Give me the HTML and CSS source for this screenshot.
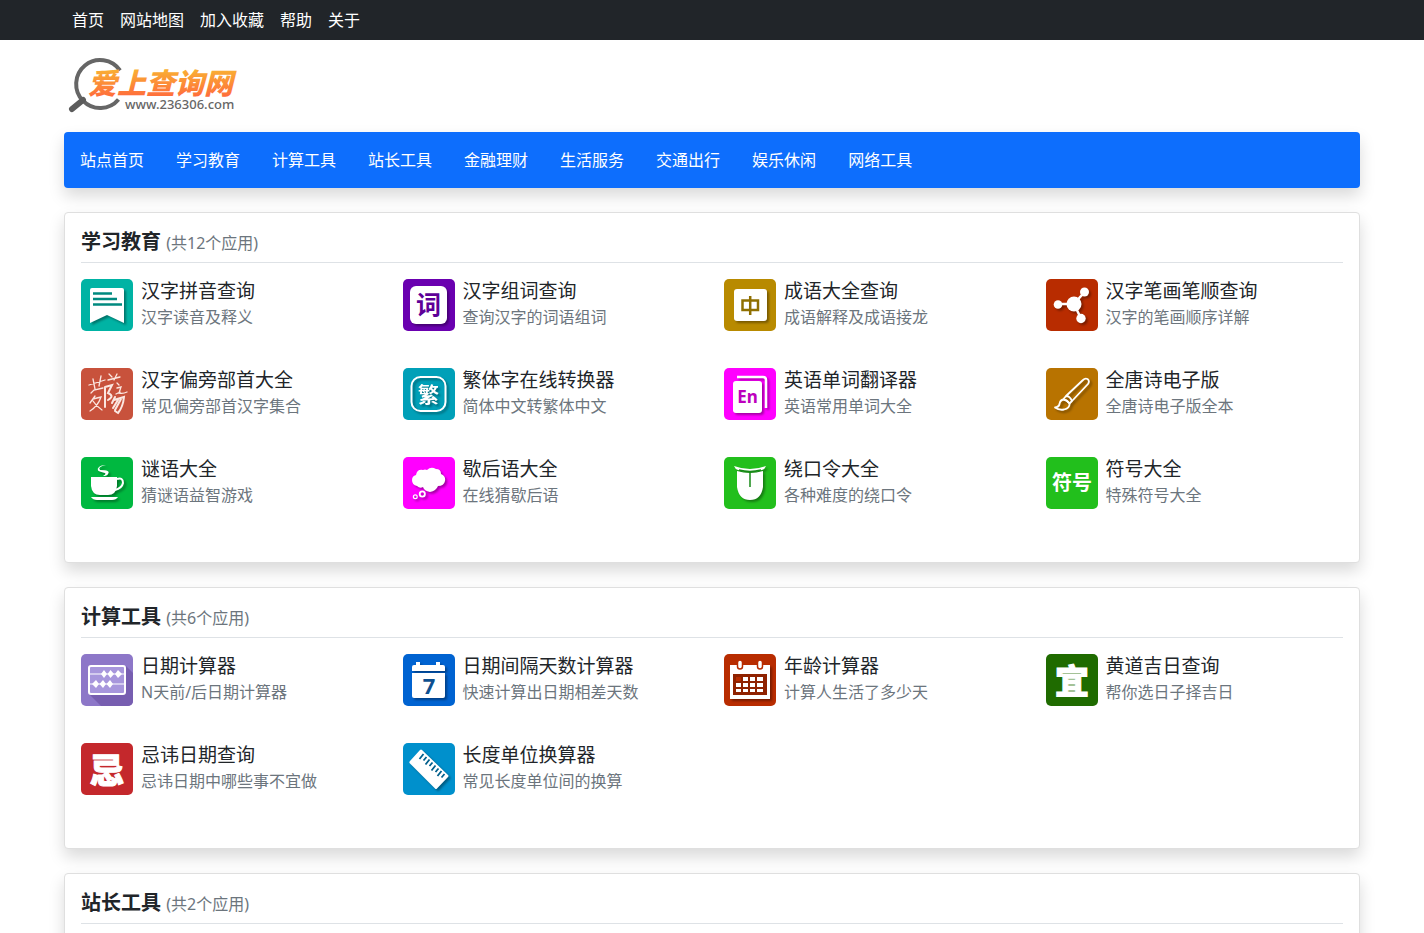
FILE: index.html
```html
<!DOCTYPE html>
<html lang="zh-CN">
<head>
    <meta charset="UTF-8">
    <meta name="viewport" content="width=device-width, initial-scale=1.0">
    <title>爱上查询网</title>
    <link rel="stylesheet" href="styles.css">
</head>
<body>
    <!-- Top bar -->
    <div class="topbar">
        <nav class="container topbar-nav">
            <a href="#">首页</a>
            <a href="#">网站地图</a>
            <a href="#">加入收藏</a>
            <a href="#">帮助</a>
            <a href="#">关于</a>
        </nav>
    </div>

    <div class="container">
        <!-- Logo -->
        <header class="header">
            <a href="#" class="logo">
                <svg width="180" height="60" viewBox="0 0 180 60">
                    <defs>
                        <linearGradient id="orange" x1="0" y1="0" x2="0" y2="1">
                            <stop offset="0.2" stop-color="#f9b233"/>
                            <stop offset="0.9" stop-color="#ff6a3c"/>
                        </linearGradient>
                    </defs>
                    <path d="M56 14.500A24 24 0 1 0 54.500 43.500" fill="none" stroke="#666" stroke-width="4"/>
                    <path d="M19 44L8 53" stroke="#5c5c5c" stroke-width="6" stroke-linecap="round"/>
                    <text class="logo-name" x="24" y="38" fill="url(#orange)">爱上查询网</text>
                    <text class="logo-url" x="61" y="53">www.236306.com</text>
                </svg>
            </a>
        </header>

        <!-- Main menu -->
        <nav class="menu">
            <a href="#">站点首页</a>
            <a href="#">学习教育</a>
            <a href="#">计算工具</a>
            <a href="#">站长工具</a>
            <a href="#">金融理财</a>
            <a href="#">生活服务</a>
            <a href="#">交通出行</a>
            <a href="#">娱乐休闲</a>
            <a href="#">网络工具</a>
        </nav>

        <!-- 学习教育 -->
        <section class="card">
            <h2>学习教育 <small>(共12个应用)</small></h2>
            <div class="apps">
                <a href="#" class="app">
                    <svg class="icon bg-teal" viewBox="0 0 52 52">
                        <path class="white" d="M11 9H41Q43 9 43 11V44L26 36L9 44V11Q9 9 11 9Z"/>
                        <path d="M12 14.500H31M12 20H36M12 25.500H41" stroke="#00897f" stroke-width="2.500"/>
                    </svg>
                    <span class="info"><b>汉字拼音查询</b><span>汉字读音及释义</span></span>
                </a>
                <a href="#" class="app">
                    <svg class="icon bg-purple" viewBox="0 0 52 52">
                        <rect class="white" x="7" y="7" width="37" height="38" rx="6"/>
                        <text x="25.500" y="35" font-size="25" fill="#5d0098">词</text>
                    </svg>
                    <span class="info"><b>汉字组词查询</b><span>查询汉字的词语组词</span></span>
                </a>
                <a href="#" class="app">
                    <svg class="icon bg-gold" viewBox="0 0 52 52">
                        <rect class="white" x="10" y="10" width="33" height="32" rx="3"/>
                        <path d="M18.500 21.500H34V31H18.500ZM26.200 17V36" fill="none" stroke="#8f6f00" stroke-width="2.500"/>
                    </svg>
                    <span class="info"><b>成语大全查询</b><span>成语解释及成语接龙</span></span>
                </a>
                <a href="#" class="app">
                    <svg class="icon bg-red" viewBox="0 0 52 52">
                        <g class="white">
                            <path d="M28 25L38.500 13M28 25H12M28 25L35 39.500" stroke="#fff" stroke-width="2.500"/>
                            <circle cx="28" cy="25" r="7.500"/>
                            <circle cx="38.500" cy="13" r="4.500"/>
                            <circle cx="12" cy="25.500" r="4.300"/>
                            <circle cx="35" cy="39.500" r="4.700"/>
                        </g>
                    </svg>
                    <span class="info"><b>汉字笔画笔顺查询</b><span>汉字的笔画顺序详解</span></span>
                </a>
                <a href="#" class="app">
                    <svg class="icon bg-brick" viewBox="0 0 52 52">
                        <g fill="none" stroke="#fbe6e0" stroke-width="1.300" stroke-linecap="round">
                            <path d="M8 17L24 12M12 11L14 21M20 8L18 18M10 25L13 22L22 20"/>
                            <path d="M28 6L31 9M36 6L33 12M27 12L39 9M36 15L38 17M36 20L40 19L38 25Q42 26 46 24M35 26L39 24"/>
                            <path stroke-width="2" d="M24 19V39M24 19L31 17L27 25Q34 28 27 32"/>
                            <path d="M14 28L9 35M12 31L20 29Q17 38 9 43M12 33Q15 38 21 42"/>
                            <path stroke-width="2" d="M34 29L31 35M33 32L43 29Q42 39 37 45L34 43M37 32L32 40M40 31L34 42"/>
                        </g>
                    </svg>
                    <span class="info"><b>汉字偏旁部首大全</b><span>常见偏旁部首汉字集合</span></span>
                </a>
                <a href="#" class="app">
                    <svg class="icon bg-cyan" viewBox="0 0 52 52">
                        <g class="white">
                            <rect x="8.500" y="9" width="34" height="34" rx="9" fill="none" stroke="#fff" stroke-width="2"/>
                            <text x="25.500" y="34" font-size="21">繁</text>
                        </g>
                    </svg>
                    <span class="info"><b>繁体字在线转换器</b><span>简体中文转繁体中文</span></span>
                </a>
                <a href="#" class="app">
                    <svg class="icon bg-pink" viewBox="0 0 52 52">
                        <g class="white">
                            <rect x="9" y="13" width="29" height="32" rx="3"/>
                            <path d="M13 9H39Q42 9 42 12V40" fill="none" stroke="#fff" stroke-width="2.500"/>
                        </g>
                        <text class="latin" x="23.500" y="35" font-size="17" fill="#bd00bd">En</text>
                    </svg>
                    <span class="info"><b>英语单词翻译器</b><span>英语常用单词大全</span></span>
                </a>
                <a href="#" class="app">
                    <svg class="icon bg-amber" viewBox="0 0 52 52">
                        <g class="white" stroke="#fff" stroke-width="1.800" stroke-linejoin="round">
                            <path fill="none" d="M20 28L37 12Q39 10 41.500 11Q44 13 42 16L26 33"/>
                            <path fill="none" d="M20 28Q24 28 26 33L23.500 35.500Q21 32 17.500 31Z"/>
                            <path fill="none" d="M17.500 31.500Q14 32 13.500 36Q13 39 9 39.500Q13 42.500 18 41.500Q24 40 23.500 35.500Q21 32 17.500 31.500Z"/>
                        </g>
                    </svg>
                    <span class="info"><b>全唐诗电子版</b><span>全唐诗电子版全本</span></span>
                </a>
                <a href="#" class="app">
                    <svg class="icon bg-green" viewBox="0 0 52 52">
                        <g class="white">
                            <path d="M10 20H36V29Q35 38 27 38H19Q11 38 10 29Z"/>
                            <path d="M36 22Q42 20 42 26Q41 31 34 33" fill="none" stroke="#fff" stroke-width="2"/>
                            <path d="M10 40H37Q35 43 31 43H16Q12 43 10 40Z"/>
                            <path d="M25 8Q16 10 19 13Q30 13 27 17Q26 19 22 19Q27 16 22 15.500Q14 14 18 10Q20 8 25 8Z"/>
                        </g>
                    </svg>
                    <span class="info"><b>谜语大全</b><span>猜谜语益智游戏</span></span>
                </a>
                <a href="#" class="app">
                    <svg class="icon bg-pink" viewBox="0 0 52 52">
                        <g class="white">
                            <path d="M14 29Q9 28 9 23Q9 19 13 18Q14 12 20 13Q22 12 24 13Q28 9 33 12Q38 12 38 17Q43 19 42 24Q41 29 35 29Q33 34 27 35Q21 34 20 30Q17 32 14 29Z"/>
                            <circle cx="19.300" cy="37" r="2.600" fill="none" stroke="#fff" stroke-width="1.800"/>
                            <circle cx="12.300" cy="39.700" r="1.900" fill="none" stroke="#fff" stroke-width="1.200"/>
                        </g>
                    </svg>
                    <span class="info"><b>歇后语大全</b><span>在线猜歇后语</span></span>
                </a>
                <a href="#" class="app">
                    <svg class="icon bg-lime" viewBox="0 0 52 52">
                        <g class="white">
                            <path d="M10 9Q26 15 42 9Q41 12 38 13Q26 17 14 13Q11 12 10 9Z"/>
                            <path d="M13 14Q26 18 39 14V30Q37 43 26 43Q15 43 13 30Z"/>
                        </g>
                        <path d="M26 15V30M15 13Q26 16 37 13" fill="none" stroke="#168a16" stroke-width="1.500"/>
                    </svg>
                    <span class="info"><b>绕口令大全</b><span>各种难度的绕口令</span></span>
                </a>
                <a href="#" class="app">
                    <svg class="icon bg-lime" viewBox="0 0 52 52">
                        <text x="26" y="33" font-size="20">符号</text>
                    </svg>
                    <span class="info"><b>符号大全</b><span>特殊符号大全</span></span>
                </a>
            </div>
        </section>

        <!-- 计算工具 -->
        <section class="card">
            <h2>计算工具 <small>(共6个应用)</small></h2>
            <div class="apps">
                <a href="#" class="app">
                    <svg class="icon bg-violet" viewBox="0 0 52 52">
                        <path d="M45 12L52 19V52H20L8 40Z" fill="#775eb0"/>
                        <rect x="8" y="12" width="36" height="28" rx="2" fill="#a796dc" stroke="#fff" stroke-width="2"/>
                        <path d="M8 20H44M8 30H44" stroke="#fff" stroke-width="1.200"/>
                        <path fill="#fff" d="M20 20L23 16L26 20L23 24ZM26.500 20L29.500 16L33 20L29.500 24ZM34 20L37 16L41 20L37 24ZM11 30L15 26L18 30L15 34ZM18.500 30L22 26L25 30L22 34ZM25.500 30L29 26L32 30L29 34Z"/>
                    </svg>
                    <span class="info"><b>日期计算器</b><span>N天前/后日期计算器</span></span>
                </a>
                <a href="#" class="app">
                    <svg class="icon bg-blue" viewBox="0 0 52 52">
                        <g class="white">
                            <path d="M9 17V13Q9 11 11 11H13V8H17V11H33V8H37V11H40Q42 11 42 13V17Z"/>
                            <path d="M9 19H42V42Q42 44 40 44H11Q9 44 9 42Z"/>
                        </g>
                        <text class="latin" x="26" y="40" font-size="22" fill="#0d4f8f">7</text>
                    </svg>
                    <span class="info"><b>日期间隔天数计算器</b><span>快速计算出日期相差天数</span></span>
                </a>
                <a href="#" class="app">
                    <svg class="icon bg-red" viewBox="0 0 52 52">
                        <rect class="white" x="6" y="11" width="40" height="34"/>
                        <rect x="9" y="20" width="34" height="21" fill="#8f2200"/>
                        <path fill="#fff" d="M19 23H24V27H19ZM26 23H31V27H26ZM33 23H39V27H33ZM12 29H17V33H12ZM19 29H24V33H19ZM26 29H31V33H26ZM33 29H39V33H33ZM12 35H17V38H12ZM19 35H24V38H19ZM26 35H31V38H26ZM33 35H39V38H33Z"/>
                        <path fill="#b82c00" d="M12 23H17V27H12Z"/>
                        <g fill="#fff" stroke="#b82c00" stroke-width="1.500">
                            <rect x="13.500" y="6" width="5" height="9" rx="2.500"/>
                            <rect x="33.500" y="6" width="5" height="9" rx="2.500"/>
                        </g>
                    </svg>
                    <span class="info"><b>年龄计算器</b><span>计算人生活了多少天</span></span>
                </a>
                <a href="#" class="app">
                    <svg class="icon bg-forest" viewBox="0 0 52 52">
                        <text class="heavy" x="26" y="40" font-size="34">宜</text>
                    </svg>
                    <span class="info"><b>黄道吉日查询</b><span>帮你选日子择吉日</span></span>
                </a>
                <a href="#" class="app">
                    <svg class="icon bg-crimson" viewBox="0 0 52 52">
                        <text class="heavy" x="26" y="40" font-size="34">忌</text>
                    </svg>
                    <span class="info"><b>忌讳日期查询</b><span>忌讳日期中哪些事不宜做</span></span>
                </a>
                <a href="#" class="app">
                    <svg class="icon bg-sky" viewBox="0 0 52 52">
                        <path class="white" d="M17 7Q18 6 19 7L45 32Q46 33 45 34L34 45.500Q33 46.500 32 45.500L6.500 20Q6 19 7 18Z"/>
                        <path d="M20.500 11L16.500 16M23.500 14L20.500 17.500M26.500 16.500L22.500 21.500M29.500 19.500L26.500 23M32.500 22.500L28.500 27.500M35.500 25.500L32.500 29M38.500 28L34.500 33M41.500 31L38.500 34.500" stroke="#005f8c" stroke-width="1.800"/>
                    </svg>
                    <span class="info"><b>长度单位换算器</b><span>常见长度单位间的换算</span></span>
                </a>
            </div>
        </section>

        <!-- 站长工具 -->
        <section class="card">
            <h2>站长工具 <small>(共2个应用)</small></h2>
        </section>
    </div>
</body>
</html>
```

FILE: styles.css
```css
* {
    box-sizing: border-box;
}
body {
    margin: 0;
    font-family: "Noto Sans", "Noto Sans CJK SC", sans-serif;
    font-size: 16px;
    line-height: 24px;
    color: #212529;
    background-color: #fff;
}
a {
    color: inherit;
    text-decoration: none;
}
.container {
    max-width: 1320px;
    margin: 0 auto;
    padding: 0 12px;
}
.topbar {
    background-color: #212529;
    color: #fff;
}
.topbar-nav {
    display: flex;
}
.topbar-nav a {
    padding: 8px;
}
.header {
    padding: 16px 0;
}
.logo,
.logo svg {
    display: block;
}
.logo-name {
    font-family: "Noto Sans CJK SC", sans-serif;
    font-size: 29px;
    font-weight: 900;
    font-style: italic;
}
.logo-url {
    font-size: 13px;
    font-weight: 500;
    fill: #666;
}
.menu {
    display: flex;
    flex-wrap: wrap;
    padding: 8px 0;
    border-radius: 4px;
    background-color: #0d6efd;
    color: #fff;
    box-shadow: 0 8px 16px rgba(0, 0, 0, .15);
}
.menu a {
    padding: 8px 16px;
}
.card {
    margin-top: 24px;
    padding: 16px;
    border: 1px solid #dfdfdf;
    border-radius: 4px;
    background-color: #fff;
    box-shadow: 0 8px 16px rgba(0, 0, 0, .15);
}
.card h2 {
    margin: 0 0 16px;
    padding-bottom: 8px;
    border-bottom: 1px solid #dee2e6;
    font-size: 20px;
    line-height: 25px;
}
.card small {
    font-size: 16px;
    font-weight: 400;
    line-height: 16px;
    color: #6c757d;
}
.apps {
    display: grid;
    grid-template-columns: repeat(4, 1fr);
    column-gap: 24px;
}
.app {
    display: flex;
    gap: 8px;
    margin-bottom: 37px;
}
.info b,
.info span {
    display: block;
    white-space: nowrap;
}
.info b {
    font-size: 19px;
    font-weight: 400;
    line-height: 24px;
}
.info span {
    line-height: 28px;
    color: #6c757d;
}

/* App icons */
.icon {
    flex: none;
    width: 52px;
    height: 52px;
    border-radius: 5px;
}
.icon text {
    font-family: "Noto Sans CJK SC", sans-serif;
    font-weight: 700;
    text-anchor: middle;
}
.icon text:not([fill]) {
    fill: #fff;
}
.icon .latin {
    font-family: "Noto Sans", sans-serif;
}
.icon .heavy {
    font-weight: 900;
    stroke: #fff;
    stroke-width: 1px;
}
.white {
    fill: #fff;
    filter: drop-shadow(2px 2px 1px rgba(0, 0, 0, .35));
}
.bg-teal { background-color: #00b3a4; }
.bg-purple { background-color: #6a00b0; }
.bg-gold { background-color: #b88a00; }
.bg-red { background-color: #b82c00; }
.bg-brick { background-color: #c8523c; }
.bg-cyan { background-color: #00a0b8; }
.bg-pink { background-color: #f0f; }
.bg-amber { background-color: #b87300; }
.bg-green { background-color: #00b840; }
.bg-lime { background-color: #22bf1c; }
.bg-violet { background-color: #8d77c8; }
.bg-blue { background-color: #0063d1; }
.bg-forest { background-color: #1f6b00; }
.bg-crimson { background-color: #c4282c; }
.bg-sky { background-color: #0090cc; }
```
